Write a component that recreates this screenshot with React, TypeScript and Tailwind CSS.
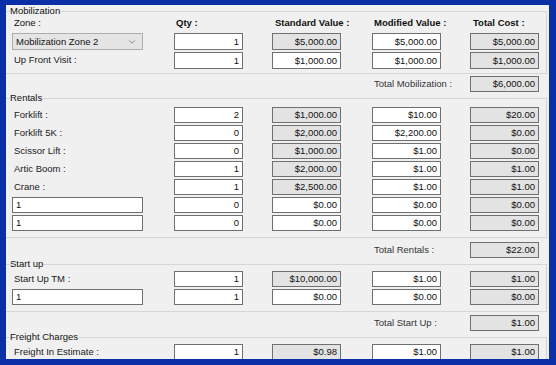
import type { ReactNode } from "react";
import { ChevronDown } from "lucide-react";
import clsx from "clsx";

type Line = {
  label?: string;
  input?: string;
  combo?: string;
  qty: string;
  std: string;
  stdRo?: boolean;
  mod: string;
  total: string;
};

function Box({ value, ro, className }: { value: string; ro?: boolean; className?: string }) {
  return (
    <div
      className={clsx(
        "flex h-full w-[69px] shrink-0 items-center justify-end border border-[#707070] pr-[3px] text-[9.5px] leading-none text-[#111]",
        ro ? "bg-[#e3e3e3]" : "bg-white",
        className,
      )}
    >
      {value}
    </div>
  );
}

function Left({ line }: { line: Line }) {
  if (line.combo)
    return (
      <div className="flex h-full w-[131px] items-center justify-between border border-[#adadad] bg-[#e5e5e5] pr-[5px] pl-[3px] text-[9.5px] leading-none text-[#111]">
        <span>{line.combo}</span>
        <ChevronDown size={10} strokeWidth={1.4} className="text-[#444]" />
      </div>
    );
  if (line.input !== undefined)
    return (
      <div className="flex h-full w-[131px] items-center border border-[#707070] bg-white pl-[3px] text-[9.5px] leading-none text-[#111]">
        {line.input}
      </div>
    );
  return <span className="pl-[2px] text-[9.5px] text-[#1a1a1a]">{line.label}</span>;
}

function Row({ line, h = "h-[16px]" }: { line: Line; h?: string }) {
  return (
    <div className={clsx("flex items-center pl-[6px]", h)}>
      <div className="flex h-full w-[162px] items-center">
        <Left line={line} />
      </div>
      <Box value={line.qty} />
      <Box value={line.std} ro={line.stdRo} className="ml-[29px]" />
      <Box value={line.mod} className="ml-[31px]" />
      <Box value={line.total} ro className="ml-[29px]" />
    </div>
  );
}

function TotalRow({ label, value, className }: { label: string; value: string; className: string }) {
  return (
    <div className={clsx("flex items-start pl-[366px]", className)}>
      <div className="flex h-[16px] w-[98px] items-center pl-[2px] text-[9.5px] text-[#333]">{label}</div>
      <Box value={value} ro className="h-[16px]" />
    </div>
  );
}

function Group({ title, children, className }: { title: string; children: ReactNode; className?: string }) {
  return (
    <fieldset className={clsx("-ml-px w-[542px] border border-[#d6d6d6]", className)}>
      <legend className="ml-[4px] text-[9.5px] leading-[12px] text-[#111]">{title}</legend>
      {children}
    </fieldset>
  );
}

const rentals: Line[] = [
  { label: "Forklift :", qty: "2", std: "$1,000.00", stdRo: true, mod: "$10.00", total: "$20.00" },
  { label: "Forklift 5K :", qty: "0", std: "$2,000.00", stdRo: true, mod: "$2,200.00", total: "$0.00" },
  { label: "Scissor Lift :", qty: "0", std: "$1,000.00", stdRo: true, mod: "$1.00", total: "$0.00" },
  { label: "Artic Boom :", qty: "1", std: "$2,000.00", stdRo: true, mod: "$1.00", total: "$1.00" },
  { label: "Crane :", qty: "1", std: "$2,500.00", stdRo: true, mod: "$1.00", total: "$1.00" },
  { input: "1", qty: "0", std: "$0.00", mod: "$0.00", total: "$0.00" },
  { input: "1", qty: "0", std: "$0.00", mod: "$0.00", total: "$0.00" },
];

export default function App() {
  return (
    <div className="h-[365px] w-[556px] bg-[#0b2fa6] pt-[5px] pr-[7px] pb-[6px] pl-[6px] font-['Liberation_Sans',Arial,sans-serif]">
      <div className="flex h-[354px] flex-col overflow-hidden bg-[#f0f0f0]">
        <Group title="Mobilization" className="pb-[4px]">
          <div className="flex h-[12px] items-center pl-[6px] text-[9.5px] text-[#111]">
            <span className="w-[162px] pl-[2px]">Zone :</span>
            <span className="w-[98px] pl-[2px] font-bold">Qty :</span>
            <span className="w-[100px] pl-[3px] font-bold">Standard Value :</span>
            <span className="w-[98px] pl-[2px] font-bold">Modified Value :</span>
            <span className="pl-[3px] font-bold">Total Cost :</span>
          </div>
          <div className="mt-[4px] flex flex-col gap-[2px]">
            <Row
              h="h-[17px]"
              line={{ combo: "Mobilization Zone 2", qty: "1", std: "$5,000.00", stdRo: true, mod: "$5,000.00", total: "$5,000.00" }}
            />
            <Row
              h="h-[17px]"
              line={{ label: "Up Front Visit :", qty: "1", std: "$1,000.00", mod: "$1,000.00", total: "$1,000.00" }}
            />
          </div>
        </Group>
        <TotalRow label="Total Mobilization :" value="$6,000.00" className="h-[18px] pt-[2px]" />

        <Group title="Rentals" className="pt-[3px] pb-[6px]">
          <div className="flex flex-col gap-[2px]">
            {rentals.map((r, i) => (
              <Row key={i} line={r} />
            ))}
          </div>
        </Group>
        <TotalRow label="Total Rentals :" value="$22.00" className="h-[21px] pt-[4px]" />

        <Group title="Start up" className="pt-[1px] pb-[6px]">
          <div className="flex flex-col gap-[2px]">
            <Row line={{ label: "Start Up TM :", qty: "1", std: "$10,000.00", stdRo: true, mod: "$1.00", total: "$1.00" }} />
            <Row line={{ input: "1", qty: "1", std: "$0.00", mod: "$0.00", total: "$0.00" }} />
          </div>
        </Group>
        <TotalRow label="Total Start Up :" value="$1.00" className="h-[20px] pt-[3px]" />

        <Group title="Freight Charges" className="shrink-0 pt-[1px] pb-[6px]">
          <Row line={{ label: "Freight In Estimate :", qty: "1", std: "$0.98", stdRo: true, mod: "$1.00", total: "$1.00" }} />
        </Group>
      </div>
    </div>
  );
}
